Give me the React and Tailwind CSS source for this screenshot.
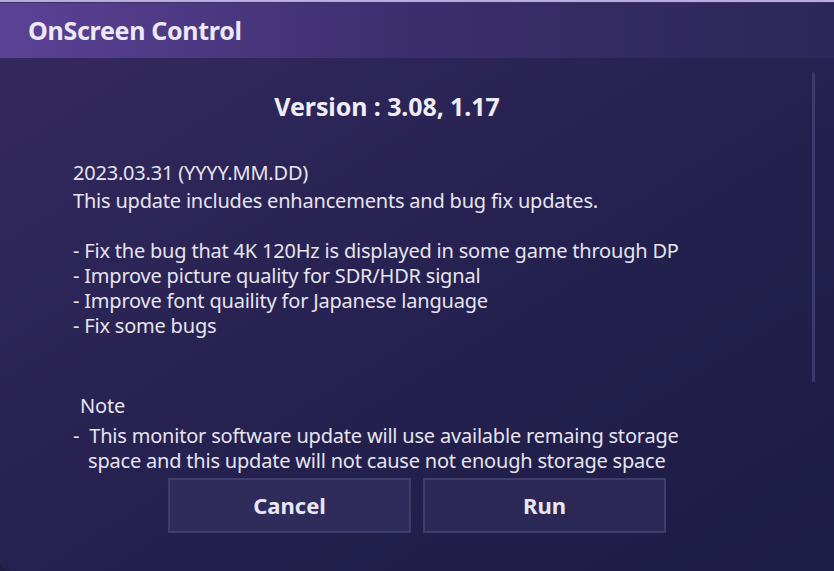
import React from "react";

const notes = [
  "- Fix the bug that 4K 120Hz is displayed in some game through DP",
  "- Improve picture quality for SDR/HDR signal",
  "- Improve font quaility for Japanese language",
  "- Fix some bugs",
];

function App() {
  return (
    <div
      className="w-[834px] h-[571px] flex flex-col overflow-hidden bg-[#1f1d45] text-[#e6e4ef]"
      style={{ fontFamily: '"Noto Sans", "Open Sans", sans-serif' }}
    >
      <div className="h-[2px] bg-[#b9addf]" />
      <div className="h-[1px] bg-[#3a2f66]" />
      {/* Header */}
      <div className="h-[55px] flex items-center px-[28px] bg-gradient-to-r from-[#5c4296] via-[#3b2e6c] to-[#2b2759]">
        <h1 className="text-[25px] font-bold tracking-[-0.3px] leading-none text-[#ece8f6]">OnScreen Control</h1>
      </div>

      {/* Body */}
      <div className="relative flex-1 flex flex-col rounded-bl-[10px] bg-gradient-to-br from-[#34295e] via-[#252150] to-[#1d1c44]">
        <div className="absolute right-[19px] top-[14px] w-[3px] h-[310px] rounded-full bg-[#3c3a6a]" />

        <div className="h-[420px] overflow-hidden pl-[73px] pt-[32px]">
          <h2 className="w-[628px] text-center text-[25px] font-bold leading-[32px] tracking-[-0.1px] text-[#efedf6]">
            Version : 3.08, 1.17
          </h2>
          <div className="mt-[38px] text-[20px] leading-[25px] tracking-[-0.2px]">
            <p className="mb-[3px]">2023.03.31 (YYYY.MM.DD)</p>
            <p>This update includes enhancements and bug fix updates.</p>
            <p className="h-[25px]" />
            {notes.map((n) => (
              <p key={n}>{n}</p>
            ))}
          </div>
          <div className="mt-[55px] text-[20px] leading-[25px] tracking-[-0.2px]">
            <p className="pl-[7px]">Note</p>
            <p className="mt-[5px]">-&nbsp;&nbsp;This monitor software update will use available remaing storage</p>
            <p className="pl-[15px]">space and this update will not cause not enough storage space</p>
            <p className="pl-[15px]">problem.</p>
          </div>
        </div>

        <div className="flex gap-[12px] pl-[168px]">
          <button className="w-[243px] h-[55px] border-2 border-[#403c6c] bg-[#2f2b5a] text-[22px] font-bold text-[#e9e7f2]">
            Cancel
          </button>
          <button className="w-[243px] h-[55px] border-2 border-[#403c6c] bg-[#2b2856] text-[22px] font-bold text-[#e9e7f2]">
            Run
          </button>
        </div>
      </div>
    </div>
  );
}

export default App;
